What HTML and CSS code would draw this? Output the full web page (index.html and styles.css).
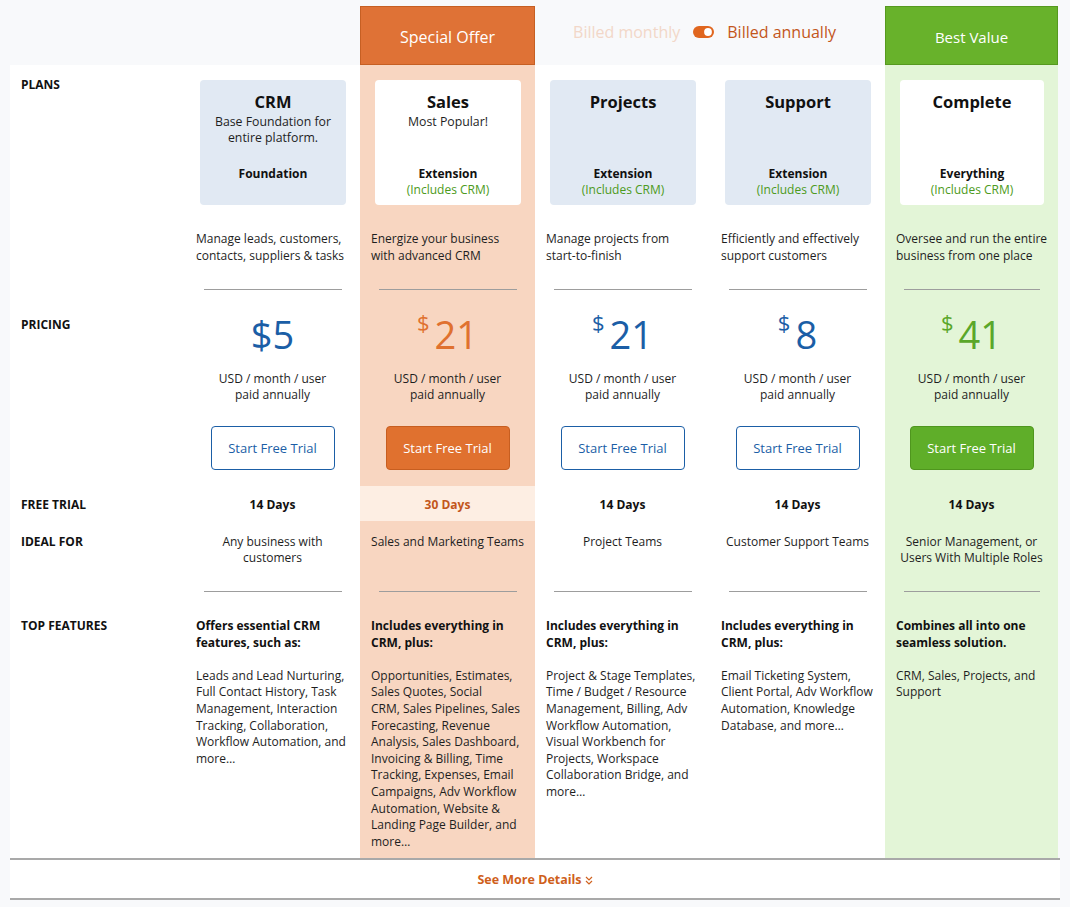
FILE: index.html
```html
<!DOCTYPE html>
<html lang="en">
<head>
<meta charset="utf-8">
<title>Pricing</title>
<link rel="stylesheet" href="styles.css">
</head>
<body>
<div class="pricing">
  <div class="grid">
    <!-- header row -->
    <div class="head"></div>
    <div class="head"></div>
    <div class="head head-sales">Special Offer</div>
    <div class="head billing">
      <span class="bill-off">Billed monthly</span>
      <svg class="toggle" width="21" height="12" viewBox="0 0 21 12"><rect x="0" y="0" width="21" height="12" rx="6" fill="#e0661f"/><circle cx="15" cy="6" r="3.9" fill="#fff"/></svg>
      <span class="bill-on">Billed annually</span>
    </div>
    <div class="head head-complete">Best Value</div>

    <!-- plans -->
    <div class="cell label l-plans">Plans</div>
    <div class="cell plan"><div class="card">
      <div><div class="card-title">CRM</div><div class="card-sub">Base Foundation for<br>entire platform.</div></div>
      <div class="card-foot"><div class="card-type">Foundation</div></div>
    </div></div>
    <div class="cell plan sales"><div class="card card-white">
      <div><div class="card-title">Sales</div><div class="card-sub">Most Popular!</div></div>
      <div class="card-foot"><div class="card-type">Extension</div><div class="inc">(Includes CRM)</div></div>
    </div></div>
    <div class="cell plan"><div class="card">
      <div><div class="card-title">Projects</div></div>
      <div class="card-foot"><div class="card-type">Extension</div><div class="inc">(Includes CRM)</div></div>
    </div></div>
    <div class="cell plan"><div class="card">
      <div><div class="card-title">Support</div></div>
      <div class="card-foot"><div class="card-type">Extension</div><div class="inc">(Includes CRM)</div></div>
    </div></div>
    <div class="cell plan complete"><div class="card card-white">
      <div><div class="card-title">Complete</div></div>
      <div class="card-foot"><div class="card-type">Everything</div><div class="inc">(Includes CRM)</div></div>
    </div></div>

    <!-- description -->
    <div class="cell"></div>
    <div class="cell desc"><p class="txt">Manage leads, customers,<br>contacts, suppliers &amp; tasks</p><div class="rule"></div></div>
    <div class="cell desc sales"><p class="txt">Energize your business<br>with advanced CRM</p><div class="rule"></div></div>
    <div class="cell desc"><p class="txt">Manage projects from<br>start-to-finish</p><div class="rule"></div></div>
    <div class="cell desc"><p class="txt">Efficiently and effectively<br>support customers</p><div class="rule"></div></div>
    <div class="cell desc complete"><p class="txt">Oversee and run the entire<br>business from one place</p><div class="rule"></div></div>

    <!-- pricing -->
    <div class="cell label l-pricing">Pricing</div>
    <div class="cell price-cell">
      <div class="price blue"><span class="amt">$5</span></div>
      <p class="per">USD / month / user<br>paid annually</p>
      <a class="btn btn-blue" href="#">Start Free Trial</a>
    </div>
    <div class="cell price-cell sales">
      <div class="price orange"><span class="cur">$</span><span class="amt">21</span></div>
      <p class="per">USD / month / user<br>paid annually</p>
      <a class="btn btn-orange" href="#">Start Free Trial</a>
    </div>
    <div class="cell price-cell">
      <div class="price blue"><span class="cur">$</span><span class="amt">21</span></div>
      <p class="per">USD / month / user<br>paid annually</p>
      <a class="btn btn-blue" href="#">Start Free Trial</a>
    </div>
    <div class="cell price-cell">
      <div class="price blue"><span class="cur">$</span><span class="amt">8</span></div>
      <p class="per">USD / month / user<br>paid annually</p>
      <a class="btn btn-blue" href="#">Start Free Trial</a>
    </div>
    <div class="cell price-cell complete">
      <div class="price green"><span class="cur">$</span><span class="amt">41</span></div>
      <p class="per">USD / month / user<br>paid annually</p>
      <a class="btn btn-green" href="#">Start Free Trial</a>
    </div>

    <!-- free trial -->
    <div class="cell label l-trial">Free Trial</div>
    <div class="cell trial">14 Days</div>
    <div class="cell trial trial-sales">30 Days</div>
    <div class="cell trial">14 Days</div>
    <div class="cell trial">14 Days</div>
    <div class="cell trial complete">14 Days</div>

    <!-- ideal for -->
    <div class="cell label l-ideal">Ideal For</div>
    <div class="cell ideal"><p class="txt-c">Any business with<br>customers</p><div class="rule"></div></div>
    <div class="cell ideal sales"><p class="txt-c">Sales and Marketing Teams</p><div class="rule"></div></div>
    <div class="cell ideal"><p class="txt-c">Project Teams</p><div class="rule"></div></div>
    <div class="cell ideal"><p class="txt-c">Customer Support Teams</p><div class="rule"></div></div>
    <div class="cell ideal complete"><p class="txt-c">Senior Management, or<br>Users With Multiple Roles</p><div class="rule"></div></div>

    <!-- top features -->
    <div class="cell label l-features">Top Features</div>
    <div class="cell feat">
      <p class="feat-head">Offers essential CRM<br>features, such as:</p>
      <p class="feat-list">Leads and Lead Nurturing,<br>Full Contact History, Task<br>Management, Interaction<br>Tracking, Collaboration,<br>Workflow Automation, and<br>more…</p>
    </div>
    <div class="cell feat sales">
      <p class="feat-head">Includes everything in<br>CRM, plus:</p>
      <p class="feat-list">Opportunities, Estimates,<br>Sales Quotes, Social<br>CRM, Sales Pipelines, Sales<br>Forecasting, Revenue<br>Analysis, Sales Dashboard,<br>Invoicing &amp; Billing, Time<br>Tracking, Expenses, Email<br>Campaigns, Adv Workflow<br>Automation, Website &amp;<br>Landing Page Builder, and<br>more…</p>
    </div>
    <div class="cell feat">
      <p class="feat-head">Includes everything in<br>CRM, plus:</p>
      <p class="feat-list">Project &amp; Stage Templates,<br>Time / Budget / Resource<br>Management, Billing, Adv<br>Workflow Automation,<br>Visual Workbench for<br>Projects, Workspace<br>Collaboration Bridge, and<br>more…</p>
    </div>
    <div class="cell feat">
      <p class="feat-head">Includes everything in<br>CRM, plus:</p>
      <p class="feat-list">Email Ticketing System,<br>Client Portal, Adv Workflow<br>Automation, Knowledge<br>Database, and more…</p>
    </div>
    <div class="cell feat complete">
      <p class="feat-head">Combines all into one<br>seamless solution.</p>
      <p class="feat-list">CRM, Sales, Projects, and<br>Support</p>
    </div>
  </div>

  <div class="more">
    <a class="more-link" href="#">See More Details
      <svg class="chev" width="8" height="9" viewBox="0 0 8 9"><path d="M1 1 L4 4 L7 1 M1 5 L4 8 L7 5" fill="none" stroke="#d0621f" stroke-width="1.2"/></svg>
    </a>
  </div>
</div>
</body>
</html>
```

FILE: styles.css
```css
* {
  box-sizing: border-box;
  margin: 0;
  padding: 0;
}

body {
  background: #f8f9fb;
  font-family: "Open Sans", "Noto Sans", sans-serif;
  font-size: 12px;
  line-height: 16.6px;
  color: #1e1e1e;
}

.pricing {
  width: 1050px;
  margin-left: 10px;
}

.grid {
  display: grid;
  grid-template-columns: repeat(6, 175px);
  grid-template-rows: 65px 157px 68px 196px 35px 71px 266px;
}

/* header row */
.head {
  background: transparent;
}

.head-sales,
.head-complete {
  margin-top: 6px;
  display: flex;
  align-items: center;
  justify-content: center;
  color: #fff;
  padding-top: 3px;
}

.head-sales {
  background: #df7236;
  border: 1px solid #c65f23;
  font-size: 16px;
}

.head-complete {
  background: #68b22b;
  border: 1px solid #56991f;
  font-size: 15px;
  margin-right: 2px;
}

.billing {
  grid-column: span 2;
  display: flex;
  align-items: center;
  justify-content: center;
  gap: 13px;
  font-size: 16px;
  padding-bottom: 1px;
  padding-right: 11px;
}

.bill-off {
  color: #f2d7c8;
}

.bill-on {
  color: #c3561b;
}

.toggle {
  display: block;
}

/* body cells */
.cell {
  background: #fff;
}

.cell.sales {
  background: #f8d6c1;
}

.cell.complete {
  background: #e3f5d7;
  margin-right: 2px;
}

.label {
  padding-left: 11px;
  font-weight: 700;
  text-transform: uppercase;
  line-height: 16px;
  color: #111;
}

.l-plans { padding-top: 12px; }
.l-pricing { padding-top: 27px; }
.l-trial { padding-top: 11px; }
.l-ideal { padding-top: 13px; }
.l-features { padding-top: 26px; }

/* plan cards */
.plan {
  padding: 15px 14px 0 15px;
}

.card {
  height: 125px;
  background: #e1e9f3;
  border-radius: 4px;
  text-align: center;
  display: flex;
  flex-direction: column;
  justify-content: space-between;
  padding: 10px 4px 7px;
}

.card-white {
  background: #fff;
}

.card-title {
  font-size: 16.5px;
  font-weight: 700;
  line-height: 24px;
  color: #111;
}

.card-sub {
  line-height: 16px;
  font-size: 12.3px;
}

.card-foot {
  height: 32px;
  line-height: 16px;
}

.card-type {
  font-weight: 700;
  color: #111;
}

.inc {
  color: #4c9a20;
}

/* description */
.desc {
  padding-top: 9px;
  display: flex;
  flex-direction: column;
}

.txt {
  padding: 0 10px 0 11px;
  white-space: nowrap;
}

.rule {
  height: 1px;
  background: #9d9d9d;
  margin: auto 18px 0 19px;
  flex: none;
}

/* pricing */
.price-cell {
  padding-top: 20px;
  text-align: center;
}

.price {
  height: 48px;
  line-height: 48px;
  font-size: 38px;
  display: flex;
  justify-content: center;
  align-items: flex-start;
}

.price .cur {
  font-size: 22px;
  line-height: 22px;
  margin-top: 1px;
  margin-right: 5px;
}

.blue { color: #1b5ea6; }
.orange { color: #e0712f; }
.green { color: #5aa72a; }

.per {
  margin-top: 13px;
  line-height: 16px;
}

.btn {
  display: inline-block;
  margin-top: 23px;
  width: 124px;
  height: 44px;
  line-height: 42px;
  border-radius: 4px;
  font-size: 13px;
  text-decoration: none;
  border: 1px solid;
}

.btn-blue {
  color: #1b5ea6;
  border-color: #1b5ea6;
  background: #fff;
}

.btn-orange {
  color: #fff;
  background: #e0712f;
  border-color: #c75e20;
}

.btn-green {
  color: #fff;
  background: #5fae29;
  border-color: #4f961e;
}

/* free trial */
.trial {
  padding-top: 11px;
  text-align: center;
  font-weight: 700;
  line-height: 16px;
  color: #111;
}

.trial-sales {
  background: #fdeee3;
  color: #c3561b;
}

/* ideal for */
.ideal {
  padding-top: 13px;
  display: flex;
  flex-direction: column;
}

.txt-c {
  text-align: center;
  line-height: 16px;
  padding: 0 6px;
  white-space: nowrap;
}

/* features */
.feat {
  padding: 26px 10px 0 11px;
  white-space: nowrap;
}

.feat-head {
  font-weight: 700;
  color: #111;
}

.feat-list {
  margin-top: 16.6px;
}

/* see more */
.more {
  height: 42px;
  background: #fff;
  border-top: 2px solid #a9a9a9;
  border-bottom: 2px solid #a9a9a9;
  display: flex;
  align-items: center;
  justify-content: center;
  padding-top: 3px;
}

.more-link {
  color: #cf5f1b;
  font-weight: 700;
  font-size: 12.5px;
  text-decoration: none;
  display: flex;
  align-items: center;
  gap: 3px;
}

.chev {
  display: block;
}
```
